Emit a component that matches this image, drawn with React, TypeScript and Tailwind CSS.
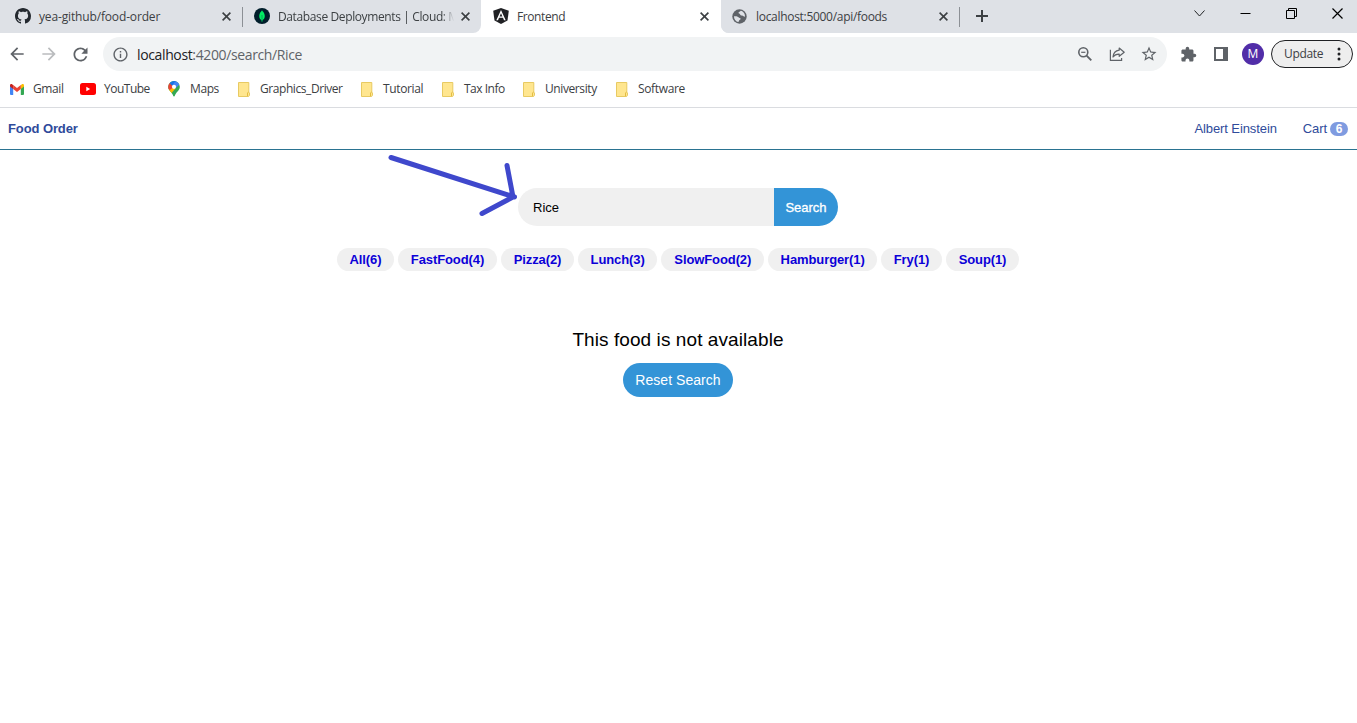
import React from "react";
import { MdArrowBack, MdArrowForward, MdExtension, MdInfoOutline, MdRefresh, MdStarBorder } from "react-icons/md";

function GitHubIcon() {
  return (
    <svg width="16" height="16" viewBox="0 0 16 16">
      <path fill="#24292f" d="M8 0C3.580 0 0 3.580 0 8c0 3.540 2.290 6.530 5.470 7.590.4.070.55-.17.55-.38 0-.19-.01-.82-.01-1.490-2.010.37-2.530-.49-2.690-.94-.09-.23-.48-.94-.82-1.130-.28-.15-.68-.52-.01-.53.63-.01 1.080.58 1.230.82.72 1.210 1.870.87 2.330.66.07-.52.28-.87.51-1.070-1.780-.2-3.640-.89-3.640-3.950 0-.87.31-1.590.82-2.150-.08-.2-.36-1.020.08-2.120 0 0 .67-.21 2.200.82.64-.18 1.320-.27 2-.27s1.360.09 2 .27c1.530-1.040 2.200-.82 2.200-.82.44 1.100.16 1.920.08 2.120.51.56.82 1.270.82 2.150 0 3.070-1.870 3.750-3.650 3.950.29.25.54.73.54 1.480 0 1.070-.01 1.930-.01 2.200 0 .21.15.46.55.38A8.010 8.010 0 0 0 16 8c0-4.420-3.580-8-8-8Z" />
    </svg>
  );
}

function MongoIcon() {
  return (
    <svg width="16" height="16" viewBox="0 0 16 16">
      <circle cx="8" cy="8" r="8" fill="#001e2b" />
      <path d="M8 2.2c.5 1.100 2.800 2.500 2.800 5.900 0 2.100-1.100 3.500-2.400 4.300L8.200 14h-.4l-.2-1.600C6.300 11.600 5.200 10.200 5.200 8.100 5.200 4.700 7.500 3.300 8 2.200Z" fill="#00ed64" />
      <path d="M8 7v6.500" stroke="#00684a" strokeWidth=".5" />
    </svg>
  );
}

function AngularIcon() {
  return (
    <svg width="16" height="16" viewBox="0 0 16 16">
      <path d="M8 0 15.800 2.700 14.500 12.500 8 16 1.500 12.500.2 2.700Z" fill="#202124" />
      <path d="M8 1.900 3.300 12.200H5l1-2.400h4l1 2.400h1.700Zm0 3.300 1.400 3.200H6.600Z" fill="#fff" fillRule="evenodd" />
    </svg>
  );
}

function GlobeIcon() {
  return (
    <svg width="15" height="15" viewBox="0 0 15 15">
      <circle cx="7.500" cy="7.500" r="7.200" fill="#5f6368" />
      <path d="M2 7.200c2.500-.2 3.600.1 4.500 1.100.7.800 1.900.7 2.100 1.500.2 1-1.300.9-1.500 1.800-.1.700-.3 1.400-1.100 1.400C3.400 12.200 1.900 9.800 2 7.200Z" fill="#dee1e6" />
      <path d="M8.700 1.800c-.2 1-2 .9-2.200 1.900-.1.700 1.300.8 1.500 1.500.3.900 1.100 1.300 2 1.200 1-.1 1.200 1.100 2.900 1.300C13.300 5 11.500 2.400 8.700 1.800Z" fill="#dee1e6" />
    </svg>
  );
}

function GmailIcon() {
  return (
    <svg width="14" height="11" viewBox="0 0 14 11">
      <path d="M0 1.500V10a1 1 0 0 0 1 1h2.200V4Z" fill="#4285f4" />
      <path d="M14 1.500V10a1 1 0 0 1-1 1h-2.200V4Z" fill="#34a853" />
      <path d="M10.800 1.100V5L14 2.600V1.400C14 .2 12.600-.4 11.700.4Z" fill="#fbbc04" />
      <path d="M3.200 5V1.100L7 4l3.800-2.900V5L7 7.900Z" fill="#ea4335" />
      <path d="M0 1.400v1.200L3.200 5V1.100L2.300.4C1.400-.4 0 .2 0 1.400Z" fill="#c5221f" />
    </svg>
  );
}

function YouTubeIcon() {
  return (
    <svg width="16" height="12" viewBox="0 0 16 12">
      <rect width="16" height="12" rx="2.500" fill="#f00" />
      <path d="M6.300 3.800v4.400L10.200 6Z" fill="#fff" />
    </svg>
  );
}

function MapsIcon() {
  return (
    <svg width="12" height="16" viewBox="0 0 12 16">
      <defs>
        <clipPath id="pin">
          <path d="M6 0a5.800 5.800 0 0 1 5.800 5.800c0 3.200-2.700 4.700-4.300 7.500C6.800 14.500 6.900 15.600 6 15.600s-.8-1.100-1.500-2.300C2.900 10.500.2 9 .2 5.800A5.800 5.800 0 0 1 6 0Z" />
        </clipPath>
      </defs>
      <g clipPath="url(#pin)">
        <rect width="12" height="16" fill="#34a853" />
        <path d="M0 8.500 4.300 3.500 7.600 7.300 3 12.800 0 11Z" fill="#fbbc04" />
        <path d="M-1 8V1l2.500 1L6 5.800 1.800 9Z" fill="#ea4335" />
        <path d="M1.500 2 4.300-1H9L5.500 6Z" fill="#1a73e8" />
        <path d="M8-1 12 3 7.600 7.300 4.500 4.500Z" fill="#4285f4" />
      </g>
      <circle cx="6" cy="5.800" r="2.100" fill="#fff" />
    </svg>
  );
}

function FolderIcon() {
  return (
    <svg width="13" height="15" viewBox="0 0 13 15">
      <path d="M.5.5h10.300v9.700l.7.600v2.400l-.9 1.300H.5Z" fill="#ffe68f" stroke="#e8ca62" />
      <path d="M9.500 14V10.800l1.300-.8" fill="none" stroke="#e3bd42" />
    </svg>
  );
}

function ZoomOutIcon() {
  return (
    <svg width="14" height="14" viewBox="0 0 14 14" fill="none" stroke="#5f6368" strokeWidth="1.600">
      <circle cx="5.300" cy="5.300" r="4.500" />
      <path d="m8.600 8.600 4.700 4.700" strokeWidth="1.900" />
      <path d="M3.200 5.300h4.200" strokeWidth="1.200" />
    </svg>
  );
}

function ShareIcon() {
  return (
    <svg width="16" height="16" viewBox="0 0 16 16" fill="none" stroke="#5f6368" strokeWidth="1.200">
      <path d="M1.400 3.800v10.600h11.200V12" />
      <path d="M10.200 2 15.200 6.200 10.200 10.300V8.100C7.500 8 5.500 8.800 4 11c.3-3.500 2.700-6.200 6.200-6.800Z" strokeLinejoin="round" />
    </svg>
  );
}

type TabProps = { icon: React.ReactNode; title: string; tracking: string; width: string; pad: string; active?: boolean; separator?: boolean; fade?: boolean };

function Tab({ icon, title, tracking, width, pad, active, separator, fade }: TabProps) {
  return (
    <div className={`flex h-[33px] shrink-0 items-center ${width} ${pad} ${active ? "bg-white" : "bg-[#dee1e6]"}`}>
      <span className="flex w-6 shrink-0 items-center pb-px">{icon}</span>
      <span className={`min-w-0 flex-1 whitespace-nowrap text-[12px] leading-4 ${tracking} ${fade ? "[mask-image:linear-gradient(to_right,black_164px,transparent_176px)]" : ""}`}>{title}</span>
      <svg className={`mb-px shrink-0 ${fade ? "mr-[10px]" : "mr-[11px]"}`} width="9" height="9" viewBox="0 0 9 9" stroke="#3c4043" strokeWidth="1.600"><path d="m.6.6 7.800 7.800m0-7.800L.6 8.400" /></svg>
      <span className={`h-5 w-px ${separator ? "bg-[#8c9095]" : ""}`} />
    </div>
  );
}

const bookmarks = [
  { label: "Gmail", icon: <GmailIcon />, cell: "w-[70px]", gap: "w-[23px]", text: "tracking-[-0.4px]" },
  { label: "YouTube", icon: <YouTubeIcon />, cell: "w-[88px]", gap: "w-6", text: "tracking-[-0.5px]" },
  { label: "Maps", icon: <MapsIcon />, cell: "w-[70px]", gap: "w-[22px]", text: "tracking-[-0.4px]" },
  { label: "Graphics_Driver", icon: <FolderIcon />, cell: "w-[123px]", gap: "w-[22px]", text: "tracking-[-0.43px]" },
  { label: "Tutorial", icon: <FolderIcon />, cell: "w-[81px]", gap: "w-[22px]", text: "tracking-[-0.35px]" },
  { label: "Tax Info", icon: <FolderIcon />, cell: "w-[81px]", gap: "w-[22px]", text: "tracking-[-0.5px]" },
  { label: "University", icon: <FolderIcon />, cell: "w-[93px]", gap: "w-[22px]", text: "tracking-[-0.4px]" },
  { label: "Software", icon: <FolderIcon />, cell: "w-[80px]", gap: "w-[22px]", text: "tracking-[-0.35px]" },
];

const tags = [
  { label: "All(6)", width: "w-[57px]" },
  { label: "FastFood(4)", width: "w-[99px]" },
  { label: "Pizza(2)", width: "w-[73px]" },
  { label: "Lunch(3)", width: "w-[79.300px]" },
  { label: "SlowFood(2)", width: "w-[103px]" },
  { label: "Hamburger(1)", width: "w-[108.700px]" },
  { label: "Fry(1)", width: "w-[61px]" },
  { label: "Soup(1)", width: "w-[73px]" },
];

function BrowserChrome() {
  return (
    <div className="font-['Open_Sans','Noto_Sans',sans-serif] text-[#3c4043]">
      <div className="flex h-[33px] bg-[#dee1e6]">
        <div className="flex bg-white">
          <div className="flex overflow-hidden rounded-br-lg">
            <Tab icon={<GitHubIcon />} title="yea-github/food-order" tracking="tracking-[-0.15px]" width="w-[243px]" pad="pl-[15px]" separator />
            <Tab icon={<MongoIcon />} title="Database Deployments | Cloud: M" tracking="tracking-[-0.38px]" width="w-[238px]" pad="pl-[11px]" fade />
          </div>
          <Tab icon={<AngularIcon />} title="Frontend" tracking="tracking-[-0.4px]" width="w-[240px]" pad="pl-3" active />
        </div>
        <div className="flex flex-1 bg-white">
          <div className="flex flex-1 items-center rounded-bl-lg bg-[#dee1e6]">
            <Tab icon={<GlobeIcon />} title="localhost:5000/api/foods" tracking="tracking-[-0.3px]" width="w-[239px]" pad="pl-[11px] rounded-bl-lg" separator />
            <svg className="mb-px ml-4" width="12" height="12" viewBox="0 0 12 12" stroke="#3c4043" strokeWidth="2"><path d="M6 0v12M0 6h12" /></svg>
            <div className="mb-[7px] ml-auto mr-[14px] flex items-center gap-[35px]">
              <svg width="11" height="11" viewBox="0 0 11 11" fill="none" stroke="#202124"><path d="M.5 2.500 5.500 8l5-5.500" /></svg>
              <svg width="11" height="11" viewBox="0 0 11 11" stroke="#000"><path d="M.5 5.500h10" /></svg>
              <svg width="11" height="11" viewBox="0 0 11 11" fill="none" stroke="#000"><path d="M.5 2.500h8v8h-8ZM2.500 2.500v-2h8v8h-2" /></svg>
              <svg width="11" height="11" viewBox="0 0 11 11" stroke="#000" strokeWidth="1.200"><path d="m.5.5 10 10m0-10-10 10" /></svg>
            </div>
          </div>
        </div>
      </div>
      <div className="flex h-[42px] items-center bg-white pl-[7px] text-[#5f6368]">
        <MdArrowBack size={20} className="shrink-0" />
        <MdArrowForward size={20} className="ml-3 shrink-0 text-[#babcbe]" />
        <MdRefresh size={21} className="ml-[11px] shrink-0" />
        <div className="ml-3 flex h-[34px] w-[1064px] shrink-0 items-center rounded-full bg-[#f1f3f4] pl-[9px]">
          <MdInfoOutline size={17} />
          <span className="ml-2 pt-px text-[14px] leading-5 tracking-[-0.37px]"><span className="text-[#202124]">localhost</span>:4200/search/Rice</span>
          <div className="ml-auto mr-[9px] flex items-center">
            <ZoomOutIcon />
            <span className="ml-[17px]"><ShareIcon /></span>
            <MdStarBorder size={18} className="ml-[15px]" />
          </div>
        </div>
        <MdExtension size={17} className="ml-[13px] shrink-0" />
        <svg className="ml-[17px] shrink-0" width="14" height="14" viewBox="0 0 14 14"><path d="M0 0h14v14H0Zm2 2v10h7V2Z" fill="#5f6368" fillRule="evenodd" /></svg>
        <span className="ml-3.5 flex size-[22px] shrink-0 items-center justify-center rounded-full bg-[#512da8] text-[12px] text-white">M</span>
        <div className="ml-[7px] flex h-7 w-[82px] shrink-0 items-center rounded-full border border-[#202124] bg-[#eee] pl-3 text-[12px] tracking-[-0.35px] text-[#3c4043]">
          <span>Update</span>
          <svg className="ml-auto mr-[11px]" width="4" height="14" viewBox="0 0 4 14" fill="#202124"><circle cx="2" cy="2" r="1.500" /><circle cx="2" cy="7" r="1.500" /><circle cx="2" cy="12" r="1.500" /></svg>
        </div>
      </div>
      <div className="flex h-[33px] items-center border-b border-[#dadce0] pb-1 pl-2.5">
        {bookmarks.map((b) => (
          <div key={b.label} className={`flex shrink-0 items-center ${b.cell}`}>
            <span className={`shrink-0 ${b.gap}`}>{b.icon}</span>
            <span className={`whitespace-nowrap text-[12px] leading-4 ${b.text}`}>{b.label}</span>
          </div>
        ))}
      </div>
    </div>
  );
}

export default function App() {
  return (
    <div className="relative h-[723px] w-[1357px] overflow-hidden bg-white font-['Liberation_Sans',Arial,sans-serif]">
      <BrowserChrome />
      <header className="flex h-[41px] items-center px-2 pt-px text-[13px] text-[#2f4b9b]">
        <a className="font-bold tracking-[-0.1px]">Food Order</a>
        <a className="ml-auto tracking-[-0.1px]">Albert Einstein</a>
        <a className="ml-[26px] tracking-[-0.1px]">Cart</a>
        <span className="ml-[3px] mr-px flex h-3.5 w-[18px] items-center justify-center rounded-full bg-[#7f9be0] text-[12px] font-bold text-white">6</span>
      </header>
      <div className="h-px bg-[#2a7391]" />
      <main className="flex flex-col items-center pr-px">
        <div className="mt-[38px] flex h-[38px] w-80 text-[13px]">
          <div className="flex flex-1 items-center rounded-l-full bg-[#f0f0f0] pl-[15px] pt-px text-black">Rice</div>
          <button className="w-16 rounded-r-full bg-[#3394d7] pt-px text-white [-webkit-text-stroke:0.3px_white]">Search</button>
        </div>
        <div className="mt-[22px] flex gap-[4px]">
          {tags.map((t) => (
            <a key={t.label} className={`flex h-[23px] items-center justify-center rounded-full bg-[#f0f0f0] text-[13px] font-bold tracking-[-0.1px] text-[#0c00d8] ${t.width}`}>{t.label}</a>
          ))}
        </div>
        <p className="mt-[56px] text-[19px] leading-[26px] tracking-[0.08px] text-black">This food is not available</p>
        <button className="mt-[10px] h-[34px] w-[110px] rounded-full bg-[#3394d7] text-[14px] tracking-[0.05px] text-white">Reset Search</button>
      </main>
      <svg className="pointer-events-none absolute left-[380px] top-[150px]" width="145" height="72" viewBox="380 150 145 72" fill="none" stroke="#3f48cc" strokeWidth="5" strokeLinecap="round" strokeLinejoin="round">
        <path d="M391 157.500 514.500 197M507 165.500 513 197 482 213.500" />
      </svg>
    </div>
  );
}
